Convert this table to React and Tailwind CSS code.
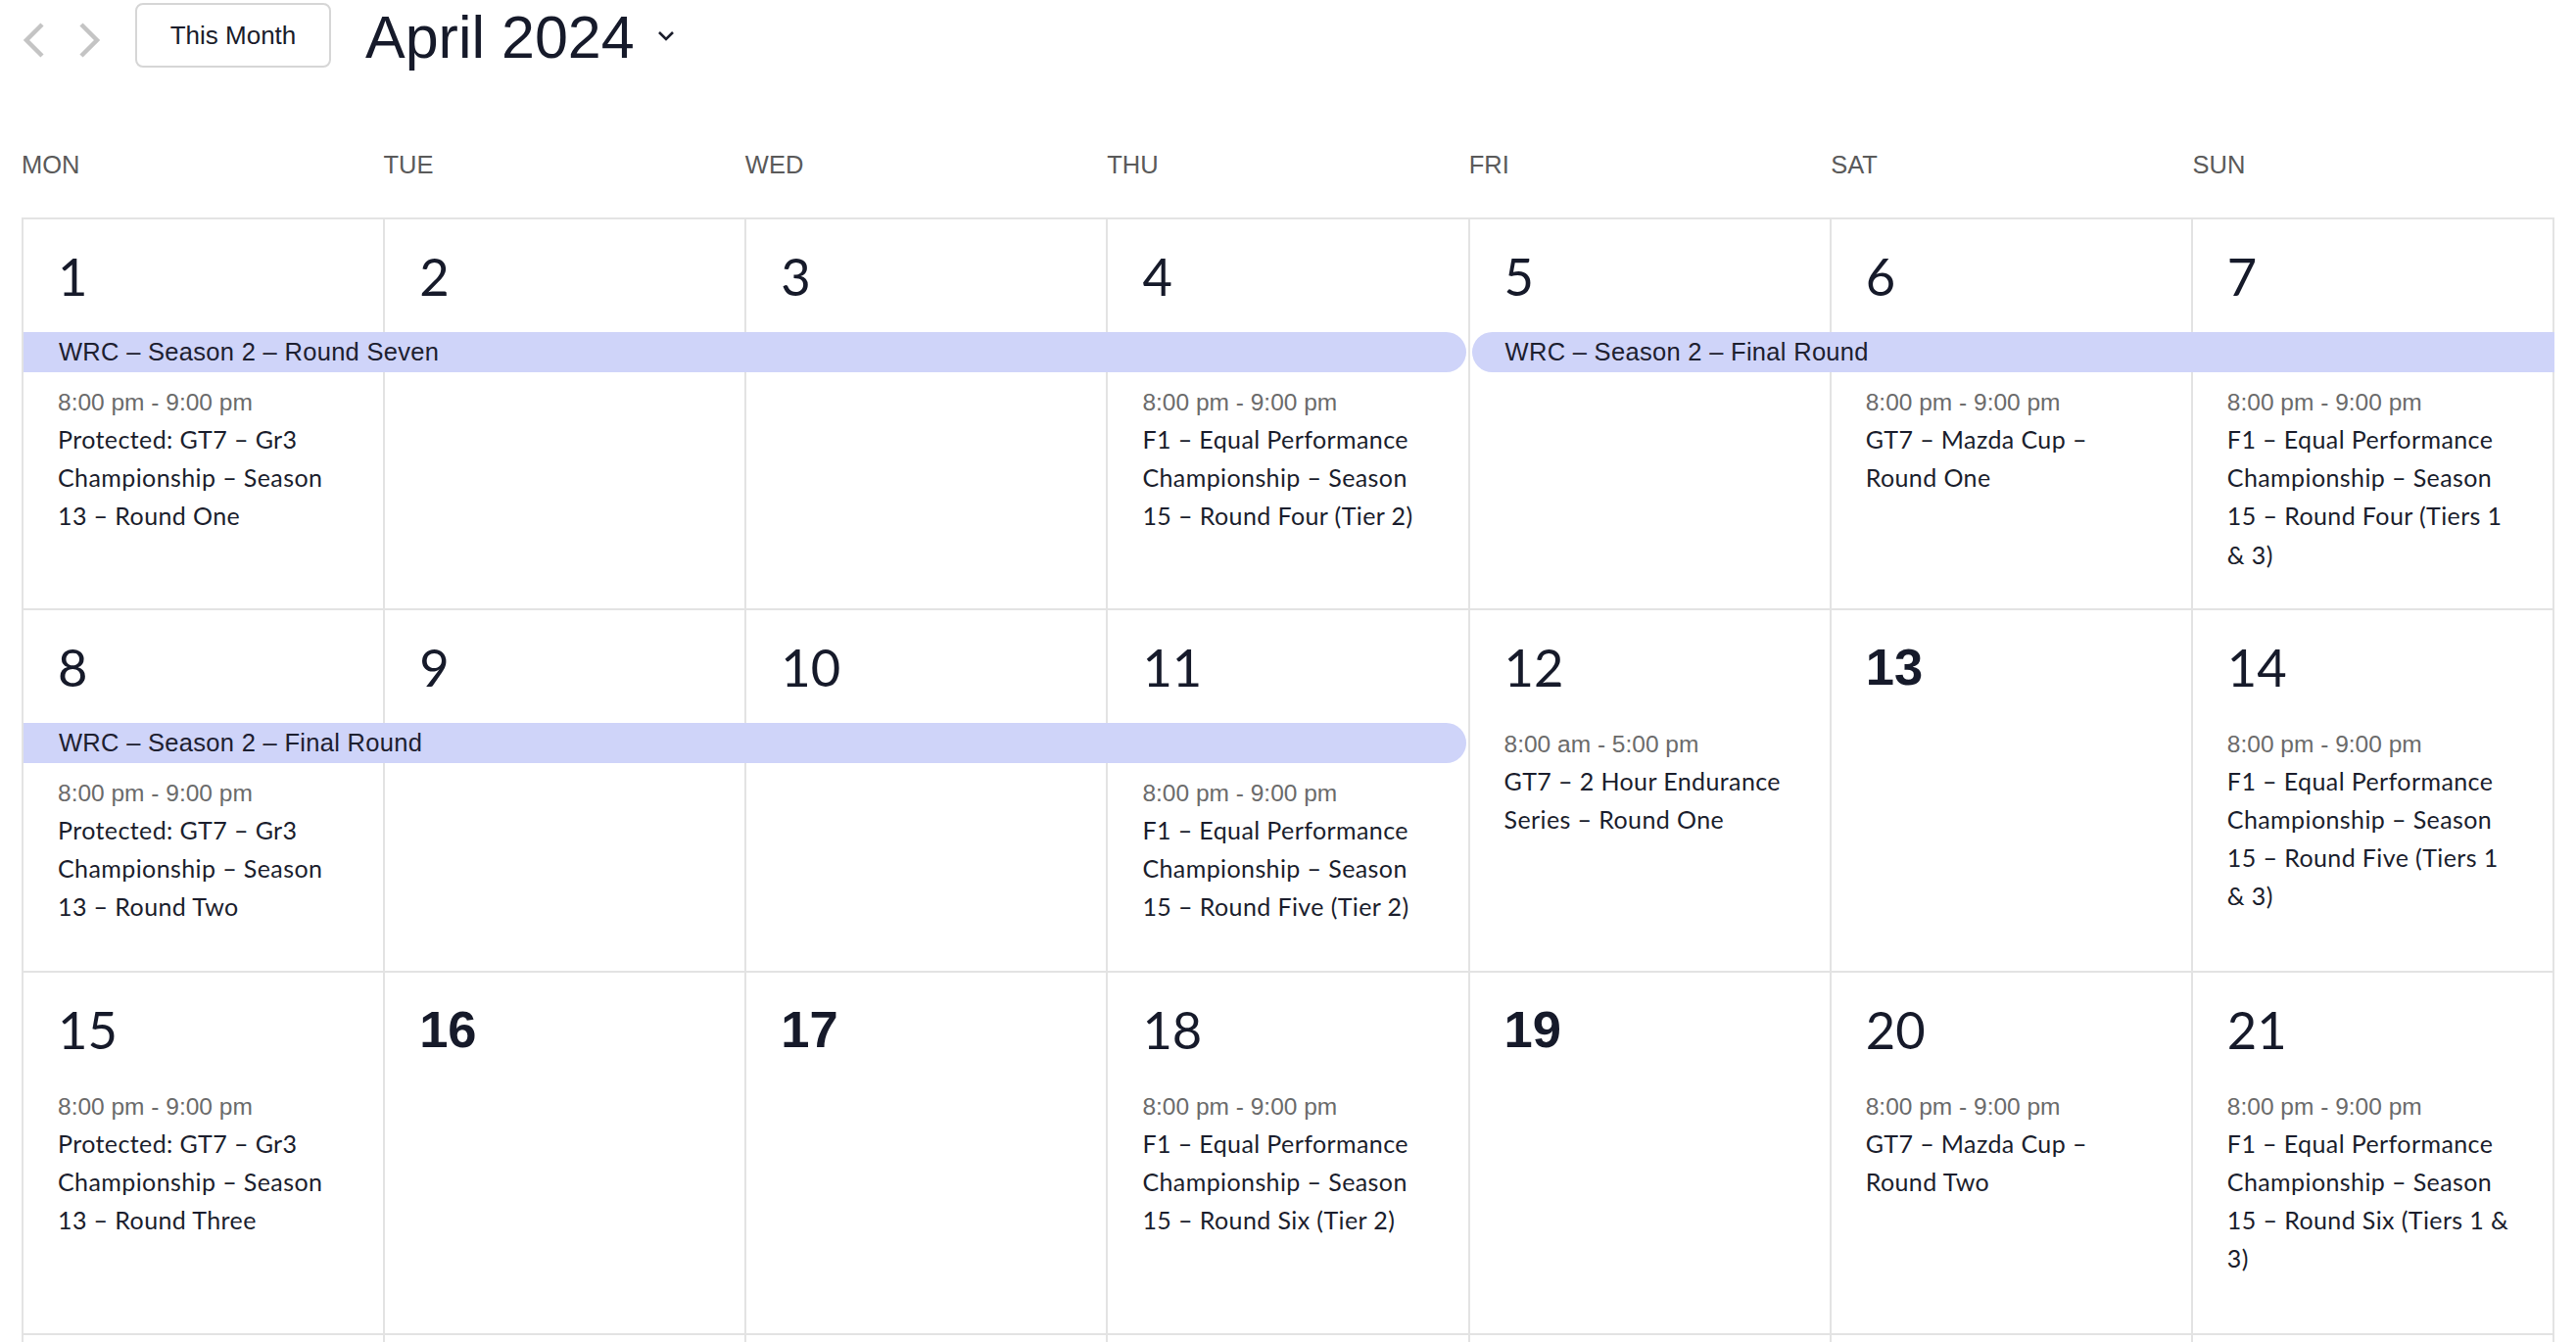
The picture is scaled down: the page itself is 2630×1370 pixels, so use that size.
import React from "react";

const F1A = "F1 – Equal Performance Championship – Season 15 – ";
const GR3 = "Protected: GT7 – Gr3 Championship – Season 13 – ";
const PM = "8:00 pm - 9:00 pm";

const COL_START = {
  1: "col-start-1",
  2: "col-start-2",
  3: "col-start-3",
  4: "col-start-4",
  5: "col-start-5",
  6: "col-start-6",
  7: "col-start-7",
};
const COL_SPAN = {
  1: "col-span-1",
  2: "col-span-2",
  3: "col-span-3",
  4: "col-span-4",
  5: "col-span-5",
  6: "col-span-6",
  7: "col-span-7",
};

const weeks = [
  {
    bars: [
      { start: 1, span: 4, text: "WRC – Season 2 – Round Seven", roundL: false, roundR: true },
      { start: 5, span: 3, text: "WRC – Season 2 – Final Round", roundL: true, roundR: false },
    ],
    days: [
      { n: 1, bar: true, events: [{ time: PM, title: GR3 + "Round One" }] },
      { n: 2, bar: true, events: [] },
      { n: 3, bar: true, events: [] },
      { n: 4, bar: true, events: [{ time: PM, title: F1A + "Round Four (Tier 2)" }] },
      { n: 5, bar: true, events: [] },
      { n: 6, bar: true, events: [{ time: PM, title: "GT7 – Mazda Cup – Round One" }] },
      { n: 7, bar: true, events: [{ time: PM, title: F1A + "Round Four (Tiers 1 & 3)" }] },
    ],
  },
  {
    bars: [{ start: 1, span: 4, text: "WRC – Season 2 – Final Round", roundL: false, roundR: true }],
    days: [
      { n: 8, bar: true, events: [{ time: PM, title: GR3 + "Round Two" }] },
      { n: 9, bar: true, events: [] },
      { n: 10, bar: true, events: [] },
      { n: 11, bar: true, events: [{ time: PM, title: F1A + "Round Five (Tier 2)" }] },
      { n: 12, events: [{ time: "8:00 am - 5:00 pm", title: "GT7 – 2 Hour Endurance Series – Round One" }] },
      { n: 13, bold: true, events: [] },
      { n: 14, events: [{ time: PM, title: F1A + "Round Five (Tiers 1 & 3)" }] },
    ],
  },
  {
    bars: [],
    days: [
      { n: 15, events: [{ time: PM, title: GR3 + "Round Three" }] },
      { n: 16, bold: true, events: [] },
      { n: 17, bold: true, events: [] },
      { n: 18, events: [{ time: PM, title: F1A + "Round Six (Tier 2)" }] },
      { n: 19, bold: true, events: [] },
      { n: 20, events: [{ time: PM, title: "GT7 – Mazda Cup – Round Two" }] },
      { n: 21, events: [{ time: PM, title: F1A + "Round Six (Tiers 1 & 3)" }] },
    ],
  },
];

function ChevronLeft() {
  return (
    <svg width="22" height="36" viewBox="0 0 22 36" fill="none">
      <polyline points="20,2 4,18 20,34" stroke="#c4c4c4" strokeWidth="4.5" fill="none" />
    </svg>
  );
}
function ChevronRight() {
  return (
    <svg width="22" height="36" viewBox="0 0 22 36" fill="none">
      <polyline points="2,2 18,18 2,34" stroke="#c4c4c4" strokeWidth="4.5" fill="none" />
    </svg>
  );
}
function ChevronDown() {
  return (
    <svg width="20" height="12" viewBox="0 0 20 12" fill="none">
      <polyline points="3,2 10,9 17,2" stroke="#1a1d2b" strokeWidth="2.6" fill="none" />
    </svg>
  );
}

function DayCell({ day, col }) {
  return (
    <div
      className={`${COL_START[col]} row-start-1 flex flex-col border-r-2 border-[#e3e3e3] pt-[26px] pl-[35px] pr-[42px] pb-[35px]`}
    >
      {day.bold ? (
        <div className="h-[63px] font-['Liberation_Sans',Arial,sans-serif] text-[52.5px] font-bold leading-[63px] text-[#161a2a]">
          {day.n}
        </div>
      ) : (
        <div className="h-[63px] font-[Lato,sans-serif] text-[52.5px] leading-[63px] text-[#161a2a]">
          {day.n}
        </div>
      )}
      {day.events.map((ev, i) => (
        <div key={i} className={day.bar ? "mt-[80px]" : "mt-[30px]"}>
          <div className="font-['Liberation_Sans',Arial,sans-serif] text-[24.5px] leading-[36px] text-[#6b6b6b]">
            {ev.time}
          </div>
          <div className="font-[Lato,sans-serif] text-[25px] leading-[39.2px] tracking-[0.4px] text-[#1b1e2d]">
            {ev.title}
          </div>
        </div>
      ))}
    </div>
  );
}

function Bar({ bar }) {
  const cls = [
    COL_START[bar.start],
    COL_SPAN[bar.span],
    "row-start-1 self-start z-10 mt-[115px] flex h-[41px] items-center overflow-hidden whitespace-nowrap bg-[#cfd4f9] text-[25.5px] tracking-[0.3px] text-[#1d2030] font-['Liberation_Sans',Arial,sans-serif]",
    bar.roundR ? "mr-[4px] rounded-r-full" : "",
    bar.roundL ? "ml-[2px] rounded-l-full pl-[34px]" : "pl-[36px]",
  ].join(" ");
  return <div className={cls}>{bar.text}</div>;
}

export default function App() {
  return (
    <div className="h-[1370px] w-[2630px] overflow-hidden bg-white px-[22px] pt-[3px] font-['Liberation_Sans',Arial,sans-serif]">
      <div className="flex h-[66px] items-center">
        <div className="ml-[1px] self-start mt-[20px]">
          <ChevronLeft />
        </div>
        <div className="ml-[36px] self-start mt-[20px]">
          <ChevronRight />
        </div>
        <div className="ml-[35px] flex h-[66px] w-[200px] items-center justify-center rounded-[8px] border-2 border-[#d6d6d6] text-[26px] text-[#1a1d2b]">
          This Month
        </div>
        <div className="ml-[35px] mt-[4px] text-[61px] leading-[70px] text-[#161a2a]">April 2024</div>
        <div className="ml-[22px] mt-[2px]">
          <ChevronDown />
        </div>
      </div>

      <div className="mt-[85px] grid grid-cols-7 text-[25.5px] leading-[28px] text-[#5a5a5a]">
        {["MON", "TUE", "WED", "THU", "FRI", "SAT", "SUN"].map((d) => (
          <div key={d}>{d}</div>
        ))}
      </div>

      <div className="mt-[40px] border-t-2 border-l-2 border-[#e3e3e3]">
        {weeks.map((w, wi) => (
          <div key={wi} className="grid min-h-[370px] grid-cols-7 border-b-2 border-[#e3e3e3]">
            {w.days.map((d, i) => (
              <DayCell key={d.n} day={d} col={i + 1} />
            ))}
            {w.bars.map((b, bi) => (
              <Bar key={bi} bar={b} />
            ))}
          </div>
        ))}
        <div className="grid min-h-[370px] grid-cols-7">
          {[1, 2, 3, 4, 5, 6, 7].map((c) => (
            <div key={c} className="border-r-2 border-[#e3e3e3]" />
          ))}
        </div>
      </div>
    </div>
  );
}
